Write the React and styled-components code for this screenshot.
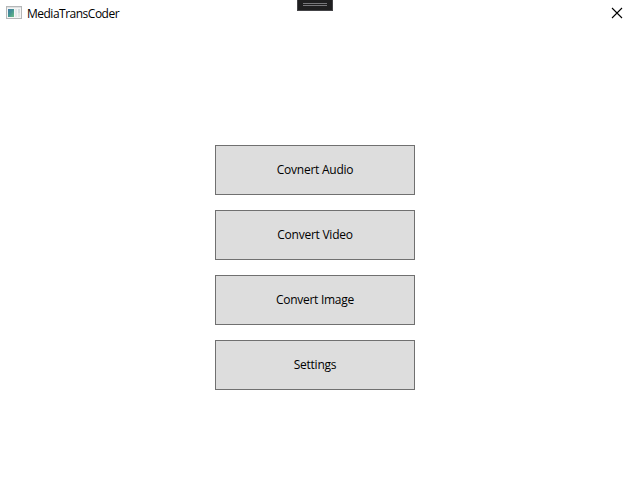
import React from "react";
import styled, { createGlobalStyle } from "styled-components";

const GlobalStyle = createGlobalStyle`
  * { box-sizing: border-box; }
  body {
    margin: 0;
    background: #fff;
    color: #000;
    font-family: "Open Sans", "Noto Sans", sans-serif;
    font-size: 12px;
  }
`;

const Window = styled.div`
  position: relative;
  display: flex;
  flex-direction: column;
  height: 100vh;
  overflow: hidden;
`;

const TitleBar = styled.header`
  display: flex;
  align-items: center;
  flex: none;
  height: 26px;
  padding: 0 9px 0 6px;
`;

const Title = styled.h1`
  flex: 1;
  margin: 0 0 0 5px;
  padding-top: 1px;
  font-size: 12px;
  font-weight: 400;
  line-height: 16px;
  letter-spacing: ${(p) => p.$tracking}px;
`;

const CloseButton = styled.button`
  display: flex;
  padding: 0;
  border: 0;
  background: none;
`;

const DebugHandle = styled.div`
  position: absolute;
  top: 0;
  left: 297px;
  display: flex;
  flex-direction: column;
  align-items: center;
  gap: 1px;
  width: 36px;
  height: 11px;
  padding-top: 3px;
  background: #1f1f20;
  border: solid #444447;
  border-width: 0 1px 1px;
`;

const Grip = styled.span`
  width: 24px;
  height: 1px;
  background: #77777a;
`;

const Menu = styled.main`
  display: flex;
  flex-direction: column;
  align-items: center;
  gap: 15px;
  padding: 119px 2px 0 0;
`;

const MenuButton = styled.button`
  width: 200px;
  height: 50px;
  padding: 0 0 1px;
  border: 1px solid #707070;
  border-radius: 0;
  background: #ddd;
  color: #000;
  font: inherit;
  line-height: 16px;
  letter-spacing: ${(p) => p.$tracking}px;
`;

const items = [
  { label: "Covnert Audio", tracking: -0.25 },
  { label: "Convert Video", tracking: -0.25 },
  { label: "Convert Image", tracking: -0.28 },
  { label: "Settings", tracking: -0.25 },
];

function AppIcon() {
  return (
    <svg width="16" height="14" viewBox="0 0 16 14" shapeRendering="crispEdges">
      <defs>
        <linearGradient id="pane" x1="0" y1="0" x2="1" y2="1">
          <stop offset="0" stopColor="#3f78a8" />
          <stop offset="0.5" stopColor="#459692" />
          <stop offset="1" stopColor="#6bbd83" />
        </linearGradient>
      </defs>
      <rect x="0.5" y="0.5" width="15" height="12" fill="#f4f5f5" stroke="#b5b7b8" />
      <rect x="1" y="1" width="14" height="1" fill="#dfe1e2" />
      <rect x="2" y="3" width="6" height="8" fill="url(#pane)" />
      <rect x="9" y="3" width="2" height="8" fill="#e4e8ea" />
      <rect x="12" y="3" width="2" height="4" fill="#d2dce0" />
      <rect x="12" y="7" width="2" height="4" fill="#e3e7e4" />
    </svg>
  );
}

function CloseIcon() {
  return (
    <svg width="12" height="12" viewBox="0 0 12 12" stroke="#000" strokeWidth="1.1">
      <path d="M1 1L11 11M11 1L1 11" />
    </svg>
  );
}

export default function App() {
  return (
    <Window>
      <GlobalStyle />
      <TitleBar>
        <AppIcon />
        <Title $tracking={-0.5}>MediaTransCoder</Title>
        <CloseButton aria-label="Close">
          <CloseIcon />
        </CloseButton>
      </TitleBar>
      <DebugHandle>
        <Grip />
        <Grip />
      </DebugHandle>
      <Menu>
        {items.map((item) => (
          <MenuButton key={item.label} $tracking={item.tracking}>
            {item.label}
          </MenuButton>
        ))}
      </Menu>
    </Window>
  );
}
